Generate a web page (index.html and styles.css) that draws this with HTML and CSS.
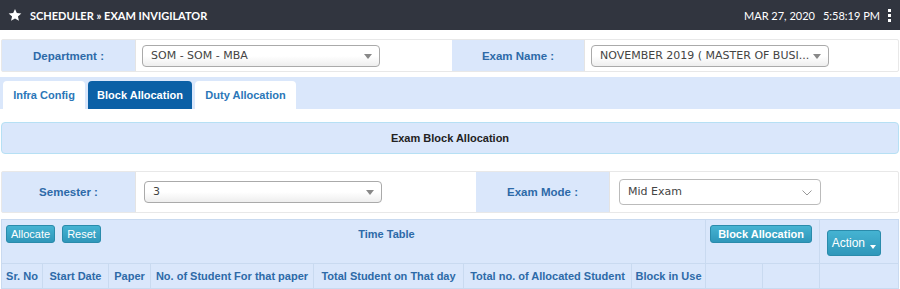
FILE: index.html
```html
<!DOCTYPE html>
<html>

<head>
    <meta charset="utf-8" />
    <title>Scheduler - Exam Invigilator</title>
    <link rel="stylesheet" href="styles.css">
</head>

<body>
    <div class="topbar">
        <div class="crumb">
            <svg class="star" width="14" height="14" viewBox="0 0 24 24"><path d="M12 1.5l3.1 7.2 7.8.6-5.9 5.1 1.8 7.6L12 18l-6.8 4 1.8-7.6L1.1 9.3l7.8-.6z" fill="#fff"/></svg>
            <span>SCHEDULER &raquo; EXAM INVIGILATOR</span>
        </div>
        <div class="clock">
            <span>MAR 27, 2020</span>
            <span class="time">5:58:19 PM</span>
            <span class="kebab"><i></i><i></i><i></i></span>
        </div>
    </div>

    <div class="filter-row first">
        <div class="label">Department :</div>
        <div class="field"><div class="select wide">SOM - SOM - MBA<b class="caret"></b></div></div>
        <div class="label">Exam Name :</div>
        <div class="field"><div class="select wide">NOVEMBER 2019 ( MASTER OF BUSI...<b class="caret"></b></div></div>
    </div>

    <div class="tabs">
        <a class="tab">Infra Config</a>
        <a class="tab active">Block Allocation</a>
        <a class="tab">Duty Allocation</a>
    </div>

    <div class="panel-title">Exam Block Allocation</div>

    <div class="filter-row second">
        <div class="label">Semester :</div>
        <div class="field"><div class="select sem">3<b class="caret"></b></div></div>
        <div class="label">Exam Mode :</div>
        <div class="field"><div class="select native">Mid Exam<svg class="chev" width="10" height="6" viewBox="0 0 10 6"><path d="M0.5 0.5L5 5l4.5-4.5" fill="none" stroke="#999" stroke-width="1"/></svg></div></div>
    </div>

    <table class="grid">
        <colgroup>
            <col style="width: 41px">
            <col style="width: 66px">
            <col style="width: 42px">
            <col style="width: 163px">
            <col style="width: 150px">
            <col style="width: 168px">
            <col style="width: 74px">
            <col style="width: 57px">
            <col style="width: 57px">
            <col style="width: 79px">
        </colgroup>
        <tr class="top">
            <td colspan="7">
                <div class="toolbar">
                    <button class="btn">Allocate</button>
                    <button class="btn">Reset</button>
                    <span class="tt">Time Table</span>
                </div>
            </td>
            <td colspan="2" class="ba"><button class="btn bold">Block Allocation</button></td>
            <td class="act"><button class="btn big">Action <b class="dcaret"></b></button></td>
        </tr>
        <tr class="head">
            <th>Sr. No</th>
            <th>Start Date</th>
            <th>Paper</th>
            <th>No. of Student For that paper</th>
            <th>Total Student on That day</th>
            <th>Total no. of Allocated Student</th>
            <th>Block in Use</th>
            <th></th>
            <th></th>
            <th></th>
        </tr>
    </table>
</body>

</html>
```

FILE: styles.css
```css
body {
    margin: 0;
    background-color: #fff;
    font-family: 'Liberation Sans', Arial, sans-serif;
    font-size: 11px;
    color: #333;
}

.topbar {
    display: flex;
    justify-content: space-between;
    align-items: center;
    height: 30px;
    padding: 0 9px 0 8px;
    background-color: #31353f;
    color: #fff;
    font-family: Lato, 'Open Sans', sans-serif;
}

.crumb {
    display: flex;
    align-items: center;
    font-weight: bold;
    font-size: 11px;
}

.star {
    margin-right: 8px;
}

.clock {
    display: flex;
    align-items: center;
    font-size: 11px;
}

.time {
    margin-left: 8px;
}

.kebab {
    display: flex;
    flex-direction: column;
    margin-left: 8px;
}

.kebab i {
    width: 3px;
    height: 3px;
    margin: 1px 0;
    background: #fff;
}

.filter-row {
    display: grid;
    margin: 0 1px;
    border: 1px solid #e8e8e8;
    border-radius: 2px;
}

.filter-row.first {
    grid-template-columns: 134px 316px 133px 1fr;
    height: 31px;
    margin-top: 9px;
}

.filter-row.second {
    grid-template-columns: 134px 340px 134px 1fr;
    height: 40px;
    margin-top: 17px;
}

.label {
    display: flex;
    align-items: center;
    justify-content: center;
    background-color: #dae7fb;
    color: #2d6aa8;
    font-weight: bold;
    font-size: 11.5px;
    border-right: 1px solid #e4e4e4;
}

.field {
    display: flex;
    align-items: center;
    padding-left: 6px;
}

.select {
    position: relative;
    box-sizing: border-box;
    height: 22px;
    line-height: 20px;
    padding: 0 8px;
    border: 1px solid #aaa;
    border-radius: 4px;
    background: linear-gradient(#fff 50%, #eee);
    color: #444;
    font-family: 'DejaVu Sans', Verdana, sans-serif;
    font-size: 11px;
    white-space: nowrap;
}

.select.wide {
    width: 238px;
}

.select.sem {
    width: 238px;
    margin-left: 2px;
}

.select.native {
    width: 202px;
    height: 26px;
    line-height: 24px;
    margin-left: 3px;
    background: #fff;
    border-color: #bbb;
}

.caret {
    position: absolute;
    right: 7px;
    top: 8px;
    border: 4px solid transparent;
    border-top: 5px solid #888;
    border-bottom: 0;
}

.chev {
    position: absolute;
    right: 8px;
    top: 10px;
}

.tabs {
    display: flex;
    gap: 3px;
    height: 28px;
    margin-top: 5px;
    padding: 4px 3px 0;
    background-color: #dae7fb;
}

.tab {
    display: flex;
    align-items: center;
    justify-content: center;
    background-color: #fff;
    border-radius: 4px 4px 0 0;
    color: #2b77b8;
    font-weight: bold;
    font-size: 11px;
}

.tab:nth-child(1) { width: 82px; }
.tab:nth-child(2) { width: 104px; }
.tab:nth-child(3) { width: 101px; }

.tab.active {
    background-color: #0b60a6;
    color: #fff;
}

.panel-title {
    height: 30px;
    line-height: 30px;
    margin: 13px 1px 0;
    border: 1px solid #b6e0f4;
    border-radius: 4px;
    background-color: #dae7fb;
    text-align: center;
    font-weight: bold;
    font-size: 11px;
    color: #222;
}

.grid {
    width: 897px;
    margin: 6px 0 0 1px;
    table-layout: fixed;
    border-collapse: collapse;
    background-color: #dae7fb;
}

.grid td, .grid th {
    border: 1px solid #c9daf0;
    padding: 0;
}

.grid .top td {
    height: 38px;
    vertical-align: top;
}

.toolbar {
    display: flex;
    align-items: center;
    padding: 5px 0 0 4px;
}

.tt {
    flex: 1;
    text-align: center;
    padding-right: 40px;
    font-weight: bold;
    color: #2d6aa8;
}

.btn {
    height: 18px;
    margin-right: 7px;
    padding: 0 4px;
    border: 1px solid #2a8bab;
    border-radius: 3px;
    background: linear-gradient(#45b3d2, #2f97ba);
    color: #fff;
    font-family: 'Liberation Sans', Arial, sans-serif;
    font-size: 11px;
}

.btn.bold {
    width: 102px;
    font-weight: bold;
}

.ba {
    padding: 5px 0 0 4px !important;
}

.act {
    vertical-align: middle !important;
    padding: 2px 0 0 7px !important;
}

.btn.big {
    height: 26px;
    width: 54px;
    padding: 0;
    font-size: 12px;
}

.dcaret {
    display: inline-block;
    vertical-align: -2px;
    margin-left: 2px;
    border: 3px solid transparent;
    border-top: 4px solid #fff;
    border-bottom: 0;
}

.grid .head th {
    height: 24px;
    color: #2d6aa8;
    font-weight: bold;
    font-size: 11px;
    white-space: nowrap;
    overflow: hidden;
}
```
